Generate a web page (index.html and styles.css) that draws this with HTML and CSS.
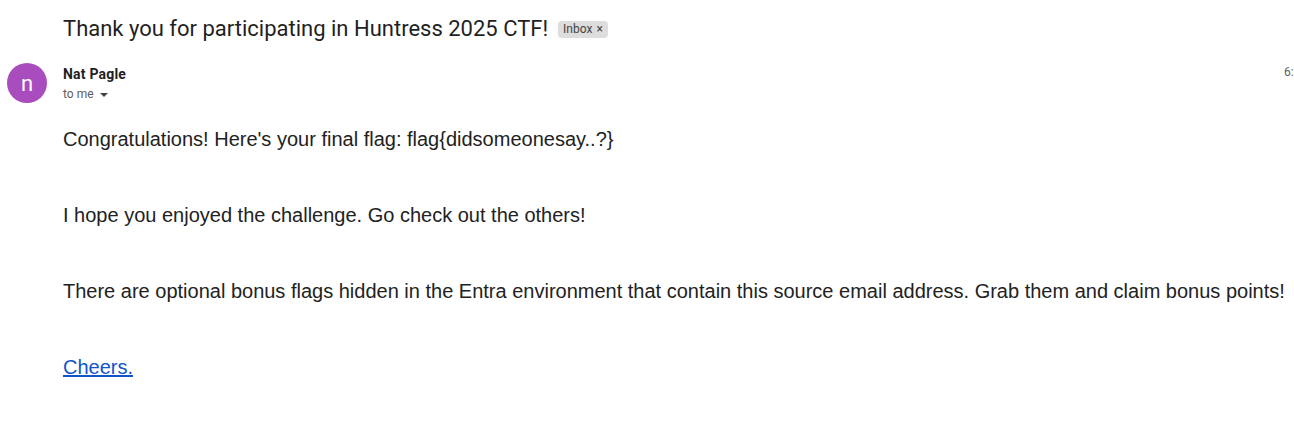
FILE: index.html
```html
<!DOCTYPE html>
<html>
<head>
<meta charset="utf-8">
<link rel="stylesheet" href="styles.css">
</head>
<body>
<div class="mail">
  <div class="subject-row">
    <h1 class="subject">Thank you for participating in Huntress 2025 CTF!</h1>
    <span class="chip">Inbox <span class="chip-x">×</span></span>
  </div>
  <div class="sender-row">
    <div class="avatar">n</div>
    <div class="sender-info">
      <div class="sender-name">Nat Pagle</div>
      <div class="to-me">to me <svg class="caret" width="8" height="4" viewBox="0 0 8 4"><path d="M0 0h8L4 4z" fill="#444"/></svg></div>
    </div>
    <div class="time">6:</div>
  </div>
  <div class="body">
    <p>Congratulations! Here's your final flag: flag{didsomeonesay..?}</p>
    <p>I hope you enjoyed the challenge. Go check out the others!</p>
    <p>There are optional bonus flags hidden in the Entra environment that contain this source email address. Grab them and claim bonus points!</p>
    <p><a href="#" class="link">Cheers.</a></p>
  </div>
</div>
</body>
</html>
```
FILE: styles.css
```css
html, body {
  margin: 0;
  padding: 0;
  background: #fff;
  overflow: hidden;
}
.mail {
  width: 1294px;
  font-family: "Liberation Sans", Arial, sans-serif;
  color: #222;
}
.subject-row {
  display: flex;
  align-items: center;
  padding: 14px 0 0 63px;
  height: 30px;
}
.subject {
  margin: 0;
  font-family: Roboto, "Open Sans", sans-serif;
  font-weight: 400;
  font-size: 22px;
  color: #1f1f1f;
  line-height: 30px;
}
.chip {
  margin-left: 10px;
  background: #dddddd;
  border-radius: 4px;
  font-size: 12px;
  color: #444;
  padding: 1px 5px 2px;
  font-family: Roboto, "Liberation Sans", sans-serif;
  line-height: 14px;
}
.chip-x {
  font-size: 12px;
  margin-left: 1px;
}
.sender-row {
  display: flex;
  padding: 19px 0 0 7px;
  position: relative;
}
.avatar {
  width: 40px;
  height: 40px;
  border-radius: 50%;
  background: #a94cbd;
  color: #fff;
  font-family: Roboto, sans-serif;
  font-size: 22px;
  display: flex;
  align-items: center;
  justify-content: center;
}
.sender-info {
  margin-left: 16px;
}
.sender-name {
  font-family: Roboto, sans-serif;
  font-weight: 700;
  font-size: 14px;
  letter-spacing: 0.2px;
  color: #1f1f1f;
  line-height: 20px;
  margin-top: 1px;
}
.to-me {
  font-family: Roboto, sans-serif;
  font-size: 12px;
  color: #5e5e5e;
  line-height: 18px;
  margin-top: 1px;
}
.caret {
  margin-left: 3px;
  vertical-align: middle;
}
.time {
  position: absolute;
  left: 1284px;
  top: 21px;
  font-family: Roboto, sans-serif;
  font-size: 12px;
  color: #5e5e5e;
}
.body {
  padding: 25px 0 0 63px;
  font-size: 20px;
  color: #222;
}
.body p {
  margin: 0 0 53px 0;
  line-height: 23px;
  white-space: nowrap;
}
.link {
  color: #1155cc;
  text-decoration: underline;
}
```
